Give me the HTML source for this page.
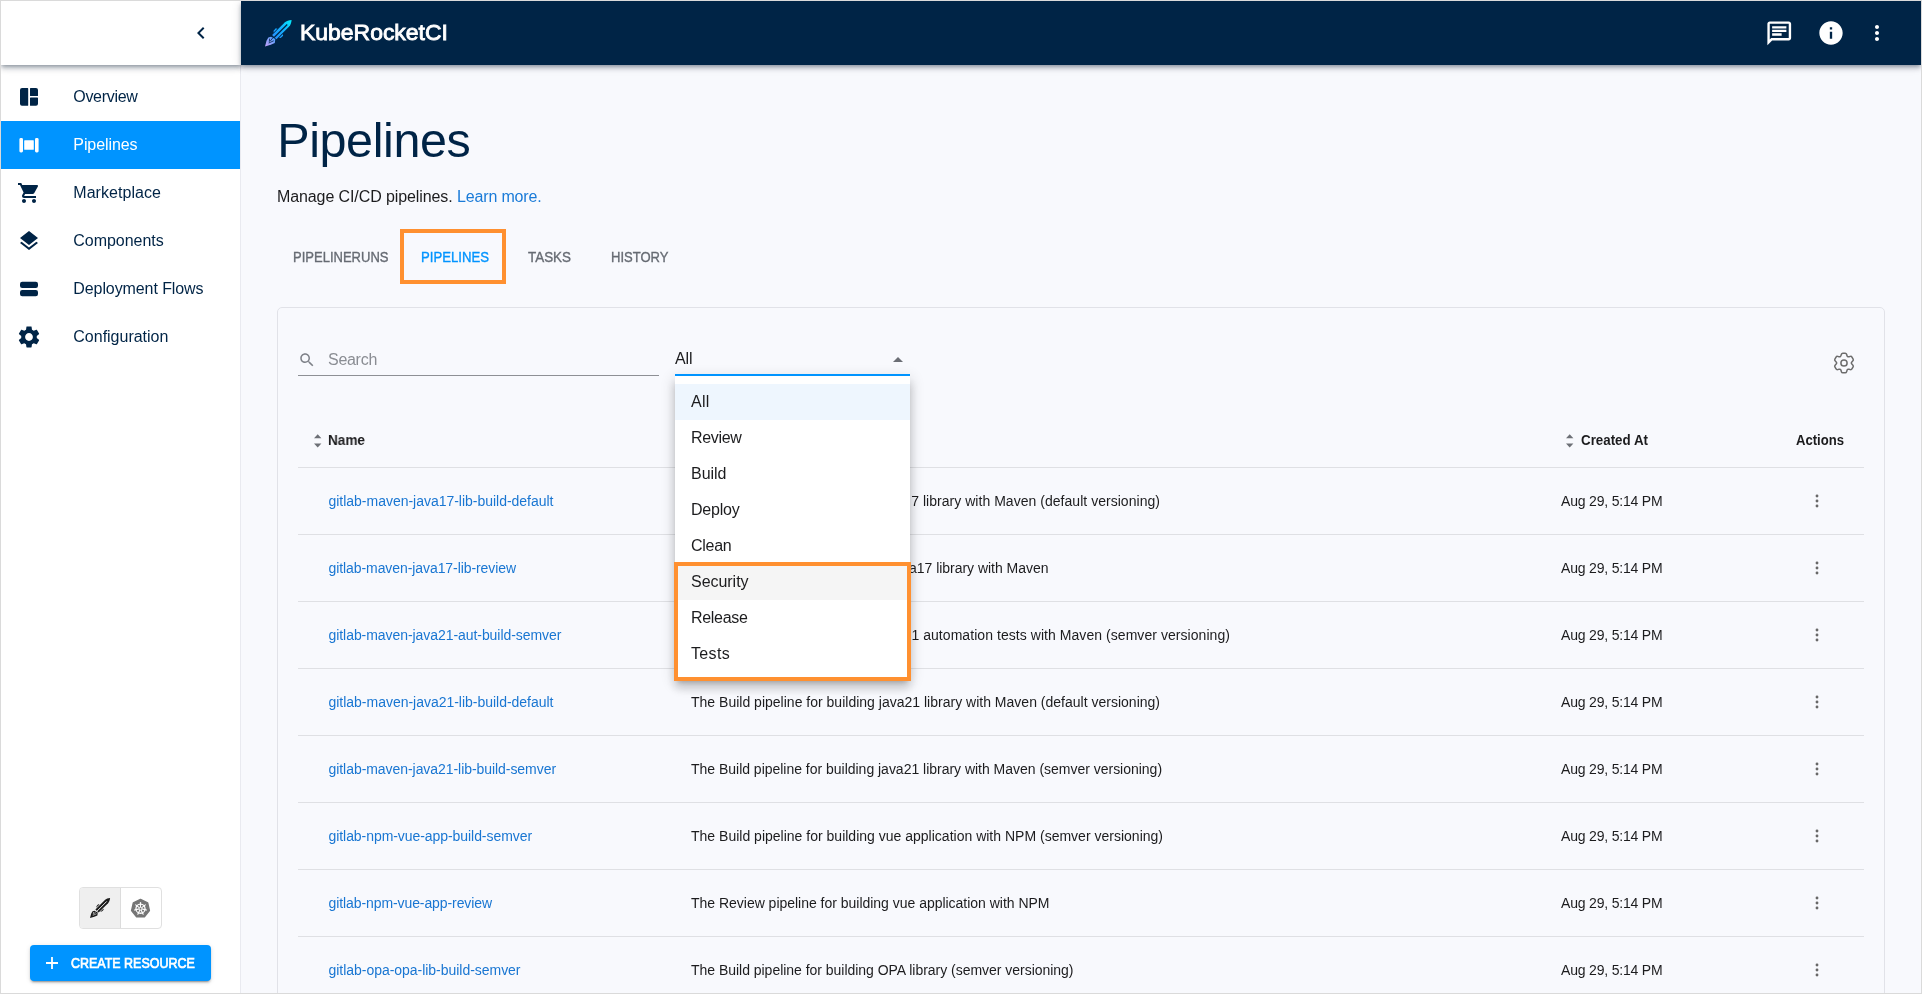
<!DOCTYPE html>
<html lang="en"><head><meta charset="utf-8"><title>KubeRocketCI - Pipelines</title><style>
*{box-sizing:border-box}
html,body{margin:0;padding:0;background:#f8f9fd}
body{width:1922px;height:994px;overflow:hidden;position:relative;font-family:"Liberation Sans",Arial,sans-serif}
#frame{position:absolute;left:0;top:0;width:1922px;height:994px;overflow:hidden;will-change:transform}
#frame>*,#frame div,#frame span.t,#frame svg.i,#frame a.t{position:absolute}
.t{white-space:pre;display:block;margin:0;padding:0;text-decoration:none}
.i{display:block;overflow:visible}
#border{left:0;top:0;width:1922px;height:994px;border:1px solid #dadada;z-index:50;pointer-events:none}
#sidebar{left:1px;top:1px;width:240px;height:992px;background:#fff;border-right:1px solid #e9eaf0}
#sidetop{left:1px;top:1px;width:240px;height:64px;background:#fff;box-shadow:0 2px 4px -1px rgba(8,24,48,.36),0 4px 5px 0 rgba(8,24,48,.15),0 1px 10px 0 rgba(8,24,48,.12);z-index:2}
#appbar{left:241px;top:1px;width:1680px;height:64px;background:#002446;box-shadow:0 2px 4px -1px rgba(8,24,48,.36),0 4px 5px 0 rgba(8,24,48,.15),0 1px 10px 0 rgba(8,24,48,.12);z-index:2}
#active{left:1px;top:121px;width:239px;height:48px;background:#0094ff}
#toggle{left:79px;top:887px;width:83px;height:42px;border:1px solid #e0e0e0;border-radius:4px;background:#fff;overflow:hidden}
#toggle div{left:0;top:0;width:41px;height:40px;background:#efefef;border-right:1px solid #dcdcdc}
#create{left:30px;top:945px;width:181px;height:36px;border-radius:4px;background:#0094ff;box-shadow:0 3px 1px -2px rgba(0,0,0,.2),0 2px 2px 0 rgba(0,0,0,.14),0 1px 5px 0 rgba(0,0,0,.12)}
#card{left:277px;top:307px;width:1608px;height:760px;border:1px solid #e1e2e8;border-radius:5px}
.hl{border:4px solid #ff9030;z-index:20}
.line{height:1px;background:#dfe0e4;left:298px;width:1566px}
#menu{left:675px;top:376px;width:235px;height:304px;background:#fff;border-radius:0 0 4px 4px;box-shadow:0 5px 5px -3px rgba(0,0,0,.2),0 8px 10px 1px rgba(0,0,0,.14),0 3px 14px 2px rgba(0,0,0,.12);z-index:10}
.z11{z-index:11}.z5{z-index:5}
#frame>nav,#frame>h1{left:0;top:0;margin:0}
</style></head><body><div id="frame">
<div id="sidebar"></div>
<div id="active"></div>
<svg class="i" style="left:17px;top:85px" width="24" height="24" viewBox="0 0 24 24" fill="#002446" ><path d="M5 3.1h5.6a.6.6 0 0 1 .6.6v16.5a.6.6 0 0 1-.6.6H5a2 2 0 0 1-2-2V5.1a2 2 0 0 1 2-2zM13.6 3.1H19a2 2 0 0 1 2 2v5.3a.6.6 0 0 1-.6.6h-6.8a.6.6 0 0 1-.6-.6V3.7a.6.6 0 0 1 .6-.6zM13.6 12.4h6.8a.6.6 0 0 1 .6.6v5.8a2 2 0 0 1-2 2h-5.4a.6.6 0 0 1-.6-.6V13a.6.6 0 0 1 .6-.6z"/></svg>
<svg class="i" style="left:17px;top:133px" width="24" height="24" viewBox="0 0 24 24" fill="#fff" ><rect x="2.4" y="5" width="3.6" height="14.4" rx="1.4"/><rect x="18" y="5" width="3.6" height="14.4" rx="1.4"/><rect x="7.2" y="7.2" width="9.6" height="9.6" rx="0.6"/></svg>
<svg class="i" style="left:17px;top:180.8px" width="24" height="24" viewBox="0 0 24 24" fill="#002446" ><path d="M7 18c-1.1 0-1.99.9-1.99 2S5.9 22 7 22s2-.9 2-2-.9-2-2-2zM1 2v2h2l3.6 7.59-1.35 2.45c-.16.28-.25.61-.25.96 0 1.1.9 2 2 2h12v-2H7.42c-.14 0-.25-.11-.25-.25l.03-.12.9-1.63h7.45c.75 0 1.41-.41 1.75-1.03l3.58-6.49c.08-.14.12-.31.12-.48 0-.55-.45-1-1-1H5.21l-.94-2H1zm16 16c-1.1 0-1.99.9-1.99 2s.89 2 1.99 2 2-.9 2-2-.9-2-2-2z"/></svg>
<svg class="i" style="left:17px;top:229px" width="24" height="24" viewBox="0 0 24 24" fill="#002446" ><path d="M11.99 18.54l-7.37-5.73L3 14.07l9 7 9-7-1.63-1.27-7.38 5.74zM12 16l7.36-5.73L21 9l-9-7-9 7 1.63 1.27L12 16z"/></svg>
<svg class="i" style="left:17px;top:277px" width="24" height="24" viewBox="0 0 24 24" fill="#002446" ><rect x="3" y="4.8" width="18" height="6.2" rx="2.2"/><rect x="3" y="13" width="18" height="6.2" rx="2.2"/></svg>
<svg class="i" style="left:15.95px;top:324.05px" width="26" height="26" viewBox="0 0 24 24" fill="#002446" ><path d="M19.14 12.94c.04-.3.06-.61.06-.94 0-.32-.02-.64-.07-.94l2.03-1.58c.18-.14.23-.41.12-.61l-1.92-3.32c-.12-.22-.37-.29-.59-.22l-2.39.96c-.5-.38-1.03-.7-1.62-.94l-.36-2.54c-.04-.24-.24-.41-.48-.41h-3.84c-.24 0-.43.17-.47.41l-.36 2.54c-.59.24-1.13.57-1.62.94l-2.39-.96c-.22-.08-.47 0-.59.22L2.74 8.87c-.12.21-.08.47.12.61l2.03 1.58c-.05.3-.09.63-.09.94s.02.64.07.94l-2.03 1.58c-.18.14-.23.41-.12.61l1.92 3.32c.12.22.37.29.59.22l2.39-.96c.5.38 1.03.7 1.62.94l.36 2.54c.05.24.24.41.48.41h3.84c.24 0 .44-.17.47-.41l.36-2.54c.59-.24 1.13-.56 1.62-.94l2.39.96c.22.08.47 0 .59-.22l1.92-3.32c.12-.22.07-.47-.12-.61l-2.01-1.58zM12 15.6c-1.98 0-3.6-1.62-3.6-3.6s1.62-3.6 3.6-3.6 3.6 1.62 3.6 3.6-1.62 3.6-3.6 3.6z"/></svg>
<nav><span class="t " style="left:73.30px;top:85.1px;font-size:16px;line-height:24px;font-weight:400;color:#002446;letter-spacing:-0.311px;">Overview</span><span class="t " style="left:73.30px;top:133.1px;font-size:16px;line-height:24px;font-weight:400;color:#fff;letter-spacing:-0.082px;">Pipelines</span><span class="t " style="left:73.30px;top:181.1px;font-size:16px;line-height:24px;font-weight:400;color:#002446;letter-spacing:0.049px;">Marketplace</span><span class="t " style="left:73.30px;top:229.1px;font-size:16px;line-height:24px;font-weight:400;color:#002446;letter-spacing:-0.032px;">Components</span><span class="t " style="left:73.30px;top:277.1px;font-size:16px;line-height:24px;font-weight:400;color:#002446;letter-spacing:-0.088px;">Deployment Flows</span><span class="t " style="left:73.30px;top:325.1px;font-size:16px;line-height:24px;font-weight:400;color:#002446;letter-spacing:-0.006px;">Configuration</span></nav>
<div id="toggle"><div></div></div>
<svg class="i" style="left:90px;top:898px" width="20" height="20" viewBox="0 0 26 26"><g fill="#1a1a1a"><path d="M12.75 8.8L10.6 8.2 8.4 10.6 8.6 12.9 9.5 13.8zM17.2 13.25L17.8 15.4 15.4 17.6 13.1 17.4 12.2 16.5z"/><path d="M13.6 8.2L8.5 13.3M17.8 12.4L12.7 17.5" stroke="#efefef" stroke-width="1.5" fill="none"/><path d="M26.1 0C23.5 0.1 21 1 19.3 2.5L7 14.8 11.2 19 23.5 6.7C25.1 5 25.9 2.6 26.1 0z"/><path d="M5.9 16.5L10.1 18.7 9.6 22.6 5.6 24.3 0 26 1.5 20.4 3.3 17.2z"/></g><path d="M21.8 4.4L9 17.2" stroke="#efefef" stroke-width="1.25" fill="none"/><path d="M7.6 17.6L5.2 20.6M8.6 20.4L3.6 22.6M4.6 18.2L4.2 21.4" stroke="#efefef" stroke-width="0.8" fill="none"/></svg>
<svg class="i" style="left:130px;top:897.5px" width="21" height="21" viewBox="0 0 24 24"><polygon points="12,1.6 20.2,5.5 22.2,14.4 16.5,21.5 7.5,21.5 1.8,14.4 3.8,5.5" fill="#757575" stroke="#757575" stroke-width="1.6" stroke-linejoin="round"/><circle cx="12" cy="12.2" r="5.2" fill="none" stroke="#fff" stroke-width="1.5"/><g stroke="#fff" stroke-width="1.3" stroke-linecap="round"><line x1="12" y1="12.2" x2="12.00" y2="5.20"/><line x1="12" y1="12.2" x2="17.47" y2="7.84"/><line x1="12" y1="12.2" x2="18.82" y2="13.76"/><line x1="12" y1="12.2" x2="15.04" y2="18.51"/><line x1="12" y1="12.2" x2="8.96" y2="18.51"/><line x1="12" y1="12.2" x2="5.18" y2="13.76"/><line x1="12" y1="12.2" x2="6.53" y2="7.84"/></g><circle cx="12" cy="12.2" r="1.5" fill="#757575" stroke="#fff" stroke-width="0.9"/></svg>
<div id="create"></div>
<svg class="i" style="left:46px;top:957px" width="12" height="12" viewBox="0 0 12 12"><path d="M5.1 0h1.8v5.1H12v1.8H6.9V12H5.1V6.9H0V5.1h5.1z" fill="#fff"/></svg>
<span class="t " style="left:70.50px;top:952.8px;font-size:14px;line-height:21px;font-weight:400;color:#fff;letter-spacing:0.000px;-webkit-text-stroke:0.7px #fff;transform:scaleX(0.8900);transform-origin:0 50%;">CREATE RESOURCE</span>
<div id="sidetop"></div>
<svg class="i" style="z-index:4;left:189px;top:21px" width="24" height="24" viewBox="0 0 24 24" fill="#002446" ><path d="M15.41 7.41L14 6l-6 6 6 6 1.41-1.41L10.83 12z"/></svg>
<header id="appbar"></header>
<svg class="i z5" style="left:265px;top:20px" width="26.5" height="26.5" viewBox="0 0 26 26"><defs><linearGradient id="rg" gradientUnits="userSpaceOnUse" x1="25" y1="1" x2="1" y2="25"><stop offset="0" stop-color="#05e6fa"/><stop offset="0.3" stop-color="#12b4ff"/><stop offset="0.62" stop-color="#2196ff"/><stop offset="0.78" stop-color="#7aa2ff"/><stop offset="1" stop-color="#b9a0f7"/></linearGradient></defs><g fill="url(#rg)"><path d="M12.75 8.8L10.6 8.2 8.4 10.6 8.6 12.9 9.5 13.8zM17.2 13.25L17.8 15.4 15.4 17.6 13.1 17.4 12.2 16.5z"/><path d="M13.6 8.2L8.5 13.3M17.8 12.4L12.7 17.5" stroke="#002446" stroke-width="1.5" fill="none"/><path d="M26.1 0C23.5 0.1 21 1 19.3 2.5L7 14.8 11.2 19 23.5 6.7C25.1 5 25.9 2.6 26.1 0z"/><path d="M5.9 16.5L10.1 18.7 9.6 22.6 5.6 24.3 0 26 1.5 20.4 3.3 17.2z"/></g><path d="M21.8 4.4L9 17.2" stroke="#002446" stroke-width="1.25" fill="none"/><path d="M7.6 17.6L5.2 20.6M8.6 20.4L3.6 22.6M4.6 18.2L4.2 21.4" stroke="#002446" stroke-width="0.8" fill="none"/></svg>
<span class="t z5 " style="left:299.80px;top:15.6px;font-size:22px;line-height:33px;font-weight:400;color:#fff;letter-spacing:0.000px;-webkit-text-stroke:0.85px #fff;transform:scaleX(1.0426);transform-origin:0 50%;">KubeRocketCI</span>
<svg class="i z5" style="left:1764.7px;top:18.75px" width="28.5" height="28.5" viewBox="0 0 24 24" fill="#fff" ><path d="M4 4h16v12H5.17L4 17.17V4m0-2c-1.1 0-1.99.9-1.99 2L2 22l4-4h14c1.1 0 2-.9 2-2V4c0-1.1-.9-2-2-2H4zm2 10h8v2H6v-2zm0-3h12v2H6V9zm0-3h12v2H6V6z"/></svg>
<svg class="i z5" style="left:1817px;top:18.8px" width="28" height="28" viewBox="0 0 24 24" fill="#fff" ><path d="M12 2C6.48 2 2 6.48 2 12s4.48 10 10 10 10-4.48 10-10S17.52 2 12 2zm1 15h-2v-6h2v6zm0-8h-2V7h2v2z"/></svg>
<svg class="i z5" style="left:1865.2px;top:21.1px" width="24" height="24" viewBox="0 0 24 24" fill="#fff" ><path d="M12 8c1.1 0 2-.9 2-2s-.9-2-2-2-2 .9-2 2 .9 2 2 2zm0 2c-1.1 0-2 .9-2 2s.9 2 2 2 2-.9 2-2-.9-2-2-2zm0 6c-1.1 0-2 .9-2 2s.9 2 2 2 2-.9 2-2-.9-2-2-2z"/></svg>
<h1 style="margin:0"><span class="t " style="left:277.20px;top:104px;font-size:48.5px;line-height:73px;font-weight:400;color:#002446;letter-spacing:-0.392px;">Pipelines</span></h1>
<span class="t " style="left:277.00px;top:184.5px;font-size:16px;line-height:24px;font-weight:400;color:#1c1c1e;letter-spacing:-0.103px;">Manage CI/CD pipelines.</span>
<span class="t " style="left:457.00px;top:184.5px;font-size:16px;line-height:24px;font-weight:400;color:#1a7bd8;letter-spacing:-0.161px;">Learn more.</span>
<span class="t " style="left:293.00px;top:246.8px;font-size:14px;line-height:21px;font-weight:400;color:#666b73;letter-spacing:0.000px;-webkit-text-stroke:0.35px #666b73;transform:scaleX(0.9299);transform-origin:0 50%;">PIPELINERUNS</span><span class="t " style="left:420.50px;top:246.8px;font-size:14px;line-height:21px;font-weight:400;color:#0094ff;letter-spacing:0.000px;-webkit-text-stroke:0.35px #0094ff;transform:scaleX(0.9396);transform-origin:0 50%;">PIPELINES</span><span class="t " style="left:527.50px;top:246.8px;font-size:14px;line-height:21px;font-weight:400;color:#666b73;letter-spacing:0.000px;-webkit-text-stroke:0.35px #666b73;transform:scaleX(0.9582);transform-origin:0 50%;">TASKS</span><span class="t " style="left:610.50px;top:246.8px;font-size:14px;line-height:21px;font-weight:400;color:#666b73;letter-spacing:0.000px;-webkit-text-stroke:0.35px #666b73;transform:scaleX(0.9314);transform-origin:0 50%;">HISTORY</span>
<div class="hl" style="left:400px;top:229px;width:106px;height:55px"></div>
<div id="card"></div>
<svg class="i" style="left:297.65px;top:350.95px" width="18" height="18" viewBox="0 0 24 24" fill="#7e8188" ><path d="M15.5 14h-.79l-.28-.27C15.41 12.59 16 11.11 16 9.5 16 5.91 13.09 3 9.5 3S3 5.91 3 9.5 5.91 16 9.5 16c1.61 0 3.09-.59 4.23-1.57l.27.28v.79l5 4.99L20.49 19l-4.99-5zm-6 0C7.01 14 5 11.99 5 9.5S7.01 5 9.5 5 14 7.01 14 9.5 11.99 14 9.5 14z"/></svg>
<span class="t " style="left:328.00px;top:347.85px;font-size:16px;line-height:24px;font-weight:400;color:#8a8d93;letter-spacing:-0.284px;">Search</span>
<div style="left:298px;top:375px;width:361px;height:1px;background:#8e9095"></div>
<span class="t " style="left:675.00px;top:346.8px;font-size:16px;line-height:24px;font-weight:400;color:#1c1c1e;letter-spacing:-0.094px;">All</span>
<svg class="i" style="left:885.7px;top:348px" width="24" height="24" viewBox="0 0 24 24" fill="#6b6e75" ><path d="M7 14l5-5 5 5z"/></svg>
<div style="left:675px;top:374px;width:235px;height:2px;background:#0094ff;z-index:12"></div>
<svg class="i" style="left:1832px;top:350.8px" width="24" height="24" viewBox="0 0 24 24"><path fill="none" stroke="#6c6c6c" stroke-width="1.5" stroke-linejoin="round" d="M15.64 5.69Q15.26 5.47 14.94 4.41L14.59 3.21Q14.27 2.16 13.17 2.16L10.83 2.16Q9.73 2.16 9.41 3.21L9.06 4.41Q8.74 5.47 8.36 5.69L8.36 5.69Q7.97 5.91 6.90 5.66L5.68 5.37Q4.61 5.11 4.06 6.06L2.89 8.09Q2.34 9.05 3.10 9.85L3.96 10.76Q4.71 11.55 4.71 12.00L4.71 12.00Q4.71 12.45 3.96 13.24L3.10 14.15Q2.34 14.95 2.89 15.91L4.06 17.94Q4.61 18.89 5.68 18.63L6.90 18.34Q7.97 18.09 8.36 18.31L8.36 18.31Q8.74 18.53 9.06 19.59L9.41 20.79Q9.73 21.84 10.83 21.84L13.17 21.84Q14.27 21.84 14.59 20.79L14.94 19.59Q15.26 18.53 15.64 18.31L15.64 18.31Q16.03 18.09 17.10 18.34L18.32 18.63Q19.39 18.89 19.94 17.94L21.11 15.91Q21.66 14.95 20.90 14.15L20.04 13.24Q19.29 12.45 19.29 12.00L19.29 12.00Q19.29 11.55 20.04 10.76L20.90 9.85Q21.66 9.05 21.11 8.09L19.94 6.06Q19.39 5.11 18.32 5.37L17.10 5.66Q16.03 5.91 15.64 5.69Z"/><circle cx="12" cy="12" r="3.1" fill="none" stroke="#6c6c6c" stroke-width="1.5"/></svg>
<svg class="i" style="left:313.9px;top:432.9px" width="7.4" height="15.6" viewBox="0 0 7.4 15.6" fill="#6d7076"><path d="M0 5.2L3.7 1.3 7.4 5.2zM0 10.5L3.7 14.4 7.4 10.5z"/></svg>
<svg class="i" style="left:1565.9px;top:432.9px" width="7.4" height="15.6" viewBox="0 0 7.4 15.6" fill="#6d7076"><path d="M0 5.2L3.7 1.3 7.4 5.2zM0 10.5L3.7 14.4 7.4 10.5z"/></svg>
<span class="t " style="left:327.90px;top:430.1px;font-size:14px;line-height:21px;font-weight:700;color:#1c1c1e;letter-spacing:0.000px;transform:scaleX(0.9701);transform-origin:0 50%;">Name</span><span class="t " style="left:1580.60px;top:430.1px;font-size:14px;line-height:21px;font-weight:700;color:#1c1c1e;letter-spacing:0.000px;transform:scaleX(0.9533);transform-origin:0 50%;">Created At</span><span class="t " style="left:1795.60px;top:430.1px;font-size:14px;line-height:21px;font-weight:700;color:#1c1c1e;letter-spacing:0.000px;transform:scaleX(0.9349);transform-origin:0 50%;">Actions</span>
<div class="line" style="top:467px"></div>
<span class="t " style="left:328.50px;top:490.8px;font-size:14px;line-height:21px;font-weight:400;color:#1976d2;letter-spacing:-0.019px;">gitlab-maven-java17-lib-build-default</span><span class="t " style="left:686.32px;top:490.8px;font-size:14px;line-height:21px;font-weight:400;color:#1c1c1e;letter-spacing:0.033px;">The Build pipeline for building java<span style="letter-spacing:2.63px">1</span>7 library with Maven (default versioning)</span><span class="t " style="left:1561.00px;top:490.8px;font-size:14px;line-height:21px;font-weight:400;color:#1c1c1e;letter-spacing:-0.186px;">Aug 29, 5:14 PM</span>
<svg class="i" style="left:1813px;top:493px" width="8" height="16" viewBox="0 0 8 16" fill="#686868"><circle cx="4" cy="3" r="1.42"/><circle cx="4" cy="8" r="1.42"/><circle cx="4" cy="13" r="1.42"/></svg>
<div class="line" style="top:534px"></div>
<span class="t " style="left:328.50px;top:557.8px;font-size:14px;line-height:21px;font-weight:400;color:#1976d2;letter-spacing:-0.079px;">gitlab-maven-java17-lib-review</span><span class="t " style="left:687.09px;top:557.8px;font-size:14px;line-height:21px;font-weight:400;color:#1c1c1e;letter-spacing:-0.026px;">The Review pipeline for building ja<span style="letter-spacing:2.57px">v</span>a17 library with Maven</span><span class="t " style="left:1561.00px;top:557.8px;font-size:14px;line-height:21px;font-weight:400;color:#1c1c1e;letter-spacing:-0.186px;">Aug 29, 5:14 PM</span>
<svg class="i" style="left:1813px;top:560px" width="8" height="16" viewBox="0 0 8 16" fill="#686868"><circle cx="4" cy="3" r="1.42"/><circle cx="4" cy="8" r="1.42"/><circle cx="4" cy="13" r="1.42"/></svg>
<div class="line" style="top:601px"></div>
<span class="t " style="left:328.50px;top:624.8px;font-size:14px;line-height:21px;font-weight:400;color:#1976d2;letter-spacing:-0.061px;">gitlab-maven-java21-aut-build-semver</span><span class="t " style="left:685.72px;top:624.8px;font-size:14px;line-height:21px;font-weight:400;color:#1c1c1e;letter-spacing:0.055px;">The Build pipeline for building java<span style="letter-spacing:2.65px">2</span>1 automation tests with Maven (semver versioning)</span><span class="t " style="left:1561.00px;top:624.8px;font-size:14px;line-height:21px;font-weight:400;color:#1c1c1e;letter-spacing:-0.186px;">Aug 29, 5:14 PM</span>
<svg class="i" style="left:1813px;top:627px" width="8" height="16" viewBox="0 0 8 16" fill="#686868"><circle cx="4" cy="3" r="1.42"/><circle cx="4" cy="8" r="1.42"/><circle cx="4" cy="13" r="1.42"/></svg>
<div class="line" style="top:668px"></div>
<span class="t " style="left:328.50px;top:691.8px;font-size:14px;line-height:21px;font-weight:400;color:#1976d2;letter-spacing:-0.019px;">gitlab-maven-java21-lib-build-default</span><span class="t " style="left:691.00px;top:691.8px;font-size:14px;line-height:21px;font-weight:400;color:#1c1c1e;letter-spacing:0.007px;">The Build pipeline for building java21 library with Maven (default versioning)</span><span class="t " style="left:1561.00px;top:691.8px;font-size:14px;line-height:21px;font-weight:400;color:#1c1c1e;letter-spacing:-0.186px;">Aug 29, 5:14 PM</span>
<svg class="i" style="left:1813px;top:694px" width="8" height="16" viewBox="0 0 8 16" fill="#686868"><circle cx="4" cy="3" r="1.42"/><circle cx="4" cy="8" r="1.42"/><circle cx="4" cy="13" r="1.42"/></svg>
<div class="line" style="top:735px"></div>
<span class="t " style="left:328.50px;top:758.8px;font-size:14px;line-height:21px;font-weight:400;color:#1976d2;letter-spacing:-0.057px;">gitlab-maven-java21-lib-build-semver</span><span class="t " style="left:691.00px;top:758.8px;font-size:14px;line-height:21px;font-weight:400;color:#1c1c1e;letter-spacing:-0.017px;">The Build pipeline for building java21 library with Maven (semver versioning)</span><span class="t " style="left:1561.00px;top:758.8px;font-size:14px;line-height:21px;font-weight:400;color:#1c1c1e;letter-spacing:-0.186px;">Aug 29, 5:14 PM</span>
<svg class="i" style="left:1813px;top:761px" width="8" height="16" viewBox="0 0 8 16" fill="#686868"><circle cx="4" cy="3" r="1.42"/><circle cx="4" cy="8" r="1.42"/><circle cx="4" cy="13" r="1.42"/></svg>
<div class="line" style="top:802px"></div>
<span class="t " style="left:328.50px;top:825.8px;font-size:14px;line-height:21px;font-weight:400;color:#1976d2;letter-spacing:-0.062px;">gitlab-npm-vue-app-build-semver</span><span class="t " style="left:691.00px;top:825.8px;font-size:14px;line-height:21px;font-weight:400;color:#1c1c1e;letter-spacing:0.006px;">The Build pipeline for building vue application with NPM (semver versioning)</span><span class="t " style="left:1561.00px;top:825.8px;font-size:14px;line-height:21px;font-weight:400;color:#1c1c1e;letter-spacing:-0.186px;">Aug 29, 5:14 PM</span>
<svg class="i" style="left:1813px;top:828px" width="8" height="16" viewBox="0 0 8 16" fill="#686868"><circle cx="4" cy="3" r="1.42"/><circle cx="4" cy="8" r="1.42"/><circle cx="4" cy="13" r="1.42"/></svg>
<div class="line" style="top:869px"></div>
<span class="t " style="left:328.50px;top:892.8px;font-size:14px;line-height:21px;font-weight:400;color:#1976d2;letter-spacing:-0.090px;">gitlab-npm-vue-app-review</span><span class="t " style="left:691.00px;top:892.8px;font-size:14px;line-height:21px;font-weight:400;color:#1c1c1e;letter-spacing:-0.018px;">The Review pipeline for building vue application with NPM</span><span class="t " style="left:1561.00px;top:892.8px;font-size:14px;line-height:21px;font-weight:400;color:#1c1c1e;letter-spacing:-0.186px;">Aug 29, 5:14 PM</span>
<svg class="i" style="left:1813px;top:895px" width="8" height="16" viewBox="0 0 8 16" fill="#686868"><circle cx="4" cy="3" r="1.42"/><circle cx="4" cy="8" r="1.42"/><circle cx="4" cy="13" r="1.42"/></svg>
<div class="line" style="top:936px"></div>
<span class="t " style="left:328.50px;top:959.8px;font-size:14px;line-height:21px;font-weight:400;color:#1976d2;letter-spacing:-0.032px;">gitlab-opa-opa-lib-build-semver</span><span class="t " style="left:691.00px;top:959.8px;font-size:14px;line-height:21px;font-weight:400;color:#1c1c1e;letter-spacing:-0.026px;">The Build pipeline for building OPA library (semver versioning)</span><span class="t " style="left:1561.00px;top:959.8px;font-size:14px;line-height:21px;font-weight:400;color:#1c1c1e;letter-spacing:-0.186px;">Aug 29, 5:14 PM</span>
<svg class="i" style="left:1813px;top:962px" width="8" height="16" viewBox="0 0 8 16" fill="#686868"><circle cx="4" cy="3" r="1.42"/><circle cx="4" cy="8" r="1.42"/><circle cx="4" cy="13" r="1.42"/></svg>
<div id="menu"><div style="left:0;top:8px;width:235px;height:36px;background:#eef6fe"></div><div style="left:0;top:188px;width:235px;height:36px;background:#f5f5f5"></div></div>
<span class="t z11 " style="left:691.00px;top:389.85px;font-size:16px;line-height:24px;font-weight:400;color:#1c1c1e;letter-spacing:0.240px;">All</span><span class="t z11 " style="left:691.00px;top:425.85px;font-size:16px;line-height:24px;font-weight:400;color:#1c1c1e;letter-spacing:-0.328px;">Review</span><span class="t z11 " style="left:691.00px;top:461.85px;font-size:16px;line-height:24px;font-weight:400;color:#1c1c1e;letter-spacing:-0.016px;">Build</span><span class="t z11 " style="left:691.00px;top:497.85px;font-size:16px;line-height:24px;font-weight:400;color:#1c1c1e;letter-spacing:-0.219px;">Deploy</span><span class="t z11 " style="left:691.00px;top:533.85px;font-size:16px;line-height:24px;font-weight:400;color:#1c1c1e;letter-spacing:-0.263px;">Clean</span><span class="t z11 " style="left:691.00px;top:569.85px;font-size:16px;line-height:24px;font-weight:400;color:#1c1c1e;letter-spacing:-0.037px;">Security</span><span class="t z11 " style="left:691.00px;top:605.85px;font-size:16px;line-height:24px;font-weight:400;color:#1c1c1e;letter-spacing:-0.315px;">Release</span><span class="t z11 " style="left:691.00px;top:641.85px;font-size:16px;line-height:24px;font-weight:400;color:#1c1c1e;letter-spacing:0.331px;">Tests</span>
<div class="hl" style="left:674px;top:562px;width:237px;height:119px"></div>
<div id="border"></div>
</div></body></html>
